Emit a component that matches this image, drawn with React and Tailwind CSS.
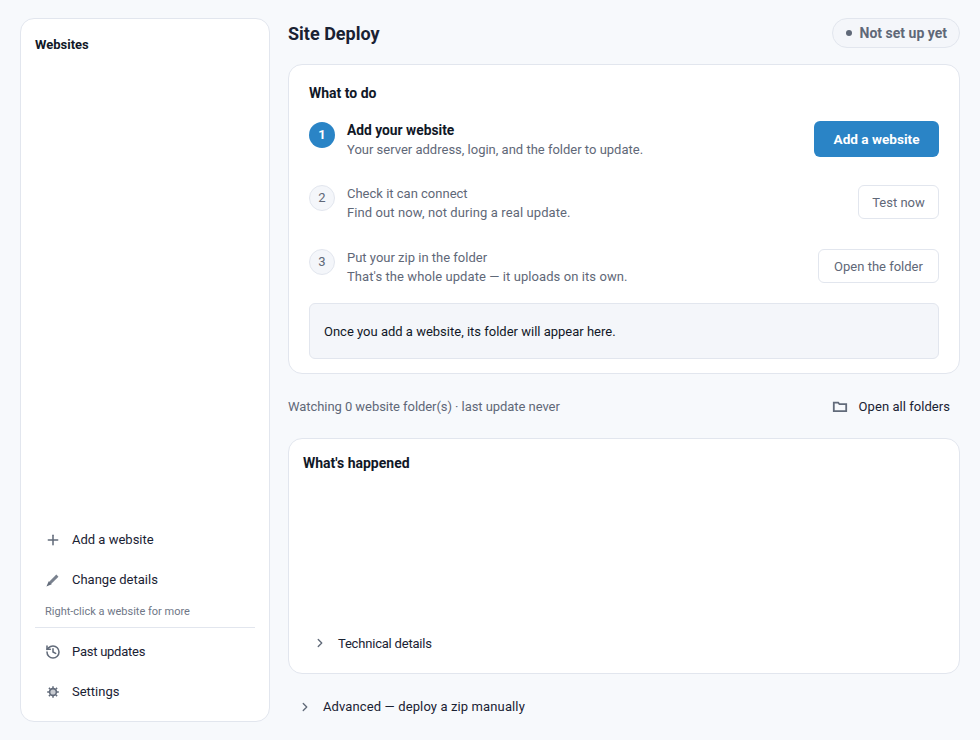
import { Plus, History, ChevronRight } from "lucide-react";

function PencilIcon({ className }) {
  return (
    <svg viewBox="0 0 16 16" width="16" height="16" className={className} fill="none" stroke="currentColor">
      <path strokeWidth="3" strokeOpacity="0.85" d="M12.4 3.6 5 11" />
      <path strokeWidth="1.5" d="M4 10.6 2.9 13.1 5.4 12z" fill="currentColor" />
    </svg>
  );
}
function SettingsIcon({ className }) {
  return (
    <svg viewBox="0 0 16 16" width="16" height="16" className={className} fill="none" stroke="currentColor">
      <circle cx="8" cy="8" r="3.4" strokeWidth="1.6" fill="currentColor" fillOpacity="0.35" />
      <path strokeWidth="1.5" d="M8 2.2v2M8 11.8v2M2.2 8h2M11.8 8h2M3.9 3.9l1.4 1.4M10.7 10.7l1.4 1.4M3.9 12.1l1.4-1.4M10.7 5.3l1.4-1.4" />
    </svg>
  );
}
function FolderIcon({ className }) {
  return (
    <svg viewBox="0 0 16 16" width="16" height="16" className={className} fill="none" stroke="currentColor" strokeWidth="1.8">
      <path d="M1.8 12.2V3.6h4.4l1.3 1.6h6.7v7z" />
    </svg>
  );
}
function NavItem({ icon: Icon, label, tracking = "" }) {
  return (
    <div className="flex h-10 items-center gap-[11px] pl-[10px] text-[13px] text-[#1a2233]">
      <Icon size={16} strokeWidth={2.3} className="text-[#626b7a]" />
      <span className={tracking}>{label}</span>
    </div>
  );
}

function Step({ n, title, desc, active, button, primary, width, descTracking = "" }) {
  return (
    <div className="flex h-[64px] items-center">
      <div className={`flex flex-1 items-start gap-3 ${active ? "pt-[2px]" : ""}`}>
        <div className={`mt-[1px] flex h-[26px] w-[26px] shrink-0 items-center justify-center rounded-full text-[13px] ${active ? "bg-[#2a84c6] font-bold text-white" : "border border-[#e2e6ee] bg-[#f4f6fa] text-[#5f6878]"}`}>{n}</div>
        <div className="text-[13px] leading-[19px]">
          <div className={active ? "text-[13.8px] font-bold text-[#111827]" : "text-[#5f6878]"}>{title}</div>
          <div className={`text-[#5f6878] ${descTracking}`}>{desc}</div>
        </div>
      </div>
      {primary ? (
        <button className="h-9 w-[125px] rounded-md bg-[#2a84c6] text-[13.6px] font-bold text-white">{button}</button>
      ) : (
        <button className={`mb-[2px] h-[34px] rounded-md border border-[#e2e6ee] bg-white pt-[1px] text-[13px] text-[#5f6878] ${width}`}>{button}</button>
      )}
    </div>
  );
}

export default function App() {
  return (
    <div className="flex h-[740px] w-[980px] gap-[18px] overflow-hidden bg-[#f7f9fc] pb-[18px] pl-5 pr-5 pt-[18px] font-['Roboto',sans-serif] text-[13px] text-[#111827]">
      <aside className="flex w-[250px] shrink-0 flex-col rounded-[14px] border border-[#e2e6ee] bg-white px-[14px] pb-[9px] pt-4">
        <div className="text-[13px] font-bold leading-5">Websites</div>
        <div className="flex-1" />
        <NavItem icon={Plus} label="Add a website" />
        <NavItem icon={PencilIcon} label="Change details" />
        <div className="px-[10px] pb-[7px] pt-[4px] text-[11px] leading-[16px] text-[#6f7787]">Right-click a website for more</div>
        <div className="mb-1 w-[220px] border-t border-[#e2e6ee]" />
        <NavItem icon={History} label="Past updates" tracking="tracking-[-0.25px]" />
        <NavItem icon={SettingsIcon} label="Settings" />
      </aside>
      <main className="flex min-w-0 flex-1 flex-col">
        <header className="flex h-[30px] items-center justify-between">
          <h1 className="pt-[2px] text-[18px] font-bold leading-7 text-[#1a2233]">Site Deploy</h1>
          <div className="flex h-[30px] items-center gap-2 rounded-full border border-[#e2e6ee] bg-[#f4f6fa] pl-[13px] pr-3 text-[14px] font-bold text-[#5f6878]">
            <span className="h-[6px] w-[6px] rounded-full bg-[#5f6878]" />
            <span>Not set up yet</span>
          </div>
        </header>
        <section className="mt-4 rounded-[14px] border border-[#e2e6ee] bg-white px-5 pb-[14px] pt-[18px]">
          <div className="text-[14px] font-bold leading-5">What to do</div>
          <div className="mt-[4px]">
            <Step n={1} title="Add your website" desc="Your server address, login, and the folder to update." active button="Add a website" primary />
            <Step n={2} title="Check it can connect" desc="Find out now, not during a real update." button="Test now" width="w-[81px]" descTracking="tracking-[0.1px]" />
            <Step n={3} title="Put your zip in the folder" desc="That's the whole update — it uploads on its own." button="Open the folder" width="w-[121px]" descTracking="tracking-[0.08px]" />
          </div>
          <div className="mt-[4px] flex h-[56px] items-center rounded-md border border-[#e2e6ee] bg-[#f4f6fa] px-[14px] pt-[1px] text-[13px] text-[#111827]">
            Once you add a website, its folder will appear here.
          </div>
        </section>
        <div className="flex h-[64px] items-center justify-between pt-[2px]">
          <span className="text-[13px] tracking-[-0.06px] text-[#5f6878]">Watching 0 website folder(s) · last update never</span>
          <div className="flex items-center gap-[11px] pr-[10px] text-[#1a2233]">
            <FolderIcon className="text-[#626b7a]" />
            <span className="tracking-[0.05px]">Open all folders</span>
          </div>
        </div>
        <section className="flex h-[236px] flex-col rounded-[14px] border border-[#e2e6ee] bg-white px-[14px] pt-[14px]">
          <div className="text-[14px] font-bold leading-5">What's happened</div>
          <div className="flex-1" />
          <div className="mb-[20px] flex items-center gap-[11px] pl-[10px] text-[#1a2233]">
            <ChevronRight size={14} strokeWidth={2.3} className="text-[#626b7a]" />
            <span className="tracking-[-0.2px]">Technical details</span>
          </div>
        </section>
        <div className="mt-[23px] flex items-center gap-[11px] pl-[10px] text-[#1a2233]">
          <ChevronRight size={14} strokeWidth={2.3} className="text-[#626b7a]" />
          <span className="tracking-[0.12px]">Advanced — deploy a zip manually</span>
        </div>
      </main>
    </div>
  );
}
